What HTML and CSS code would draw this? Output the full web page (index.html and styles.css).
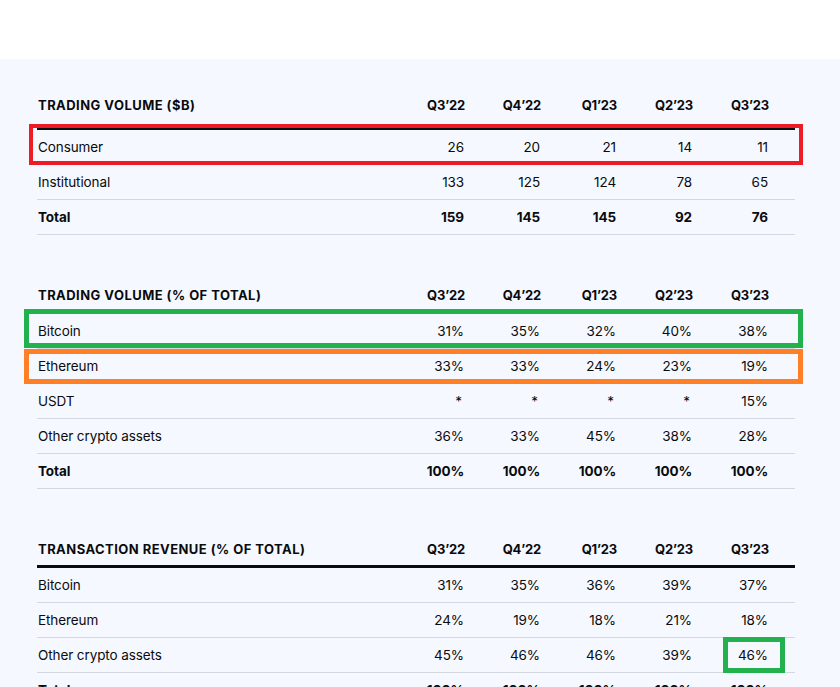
FILE: index.html
```html
<!DOCTYPE html>
<html lang="en">
<head>
<meta charset="utf-8">
<title>Trading volume</title>
<link rel="stylesheet" href="styles.css">
</head>
<body>
<div class="topbar"></div>
<main class="content">
  <section class="fin-table first">
    <div class="row head"><div class="label">TRADING VOLUME ($B)</div><div class="num">Q3’22</div><div class="num">Q4’22</div><div class="num">Q1’23</div><div class="num">Q2’23</div><div class="num">Q3’23</div></div>
    <div class="row mark-red"><div class="label">Consumer</div><div class="num">26</div><div class="num">20</div><div class="num">21</div><div class="num">14</div><div class="num">11</div></div>
    <div class="row"><div class="label">Institutional</div><div class="num">133</div><div class="num">125</div><div class="num">124</div><div class="num">78</div><div class="num">65</div></div>
    <div class="row total"><div class="label">Total</div><div class="num">159</div><div class="num">145</div><div class="num">145</div><div class="num">92</div><div class="num">76</div></div>
  </section>

  <section class="fin-table">
    <div class="row head"><div class="label">TRADING VOLUME (% OF TOTAL)</div><div class="num">Q3’22</div><div class="num">Q4’22</div><div class="num">Q1’23</div><div class="num">Q2’23</div><div class="num">Q3’23</div></div>
    <div class="row mark-green"><div class="label">Bitcoin</div><div class="num">31%</div><div class="num">35%</div><div class="num">32%</div><div class="num">40%</div><div class="num">38%</div></div>
    <div class="row mark-orange"><div class="label">Ethereum</div><div class="num">33%</div><div class="num">33%</div><div class="num">24%</div><div class="num">23%</div><div class="num">19%</div></div>
    <div class="row"><div class="label">USDT</div><div class="num star">*</div><div class="num star">*</div><div class="num star">*</div><div class="num star">*</div><div class="num">15%</div></div>
    <div class="row"><div class="label">Other crypto assets</div><div class="num">36%</div><div class="num">33%</div><div class="num">45%</div><div class="num">38%</div><div class="num">28%</div></div>
    <div class="row total"><div class="label">Total</div><div class="num">100%</div><div class="num">100%</div><div class="num">100%</div><div class="num">100%</div><div class="num">100%</div></div>
  </section>

  <section class="fin-table">
    <div class="row head"><div class="label">TRANSACTION REVENUE (% OF TOTAL)</div><div class="num">Q3’22</div><div class="num">Q4’22</div><div class="num">Q1’23</div><div class="num">Q2’23</div><div class="num">Q3’23</div></div>
    <div class="row"><div class="label">Bitcoin</div><div class="num">31%</div><div class="num">35%</div><div class="num">36%</div><div class="num">39%</div><div class="num">37%</div></div>
    <div class="row"><div class="label">Ethereum</div><div class="num">24%</div><div class="num">19%</div><div class="num">18%</div><div class="num">21%</div><div class="num">18%</div></div>
    <div class="row"><div class="label">Other crypto assets</div><div class="num">45%</div><div class="num">46%</div><div class="num">46%</div><div class="num">39%</div><div class="num mark-cell">46%</div></div>
    <div class="row total"><div class="label">Total</div><div class="num">100%</div><div class="num">100%</div><div class="num">100%</div><div class="num">100%</div><div class="num">100%</div></div>
  </section>
</main>
</body>
</html>
```

FILE: styles.css
```css
html, body {
  margin: 0;
  padding: 0;
  overflow: hidden;
}

body {
  font-family: Inter, "Noto Sans", "Liberation Sans", sans-serif;
  color: #0a0b0d;
  background: #f5f8ff;
}

.topbar {
  height: 59px;
  background: #ffffff;
}

.content {
  padding: 38px 45px 40px 37px;
  display: flex;
  flex-direction: column;
  gap: 52px;
}

.fin-table {
  display: flex;
  flex-direction: column;
}

.row {
  position: relative;
  display: grid;
  grid-template-columns: 1fr repeat(5, 76px);
  align-items: center;
  height: 35px;
  box-sizing: border-box;
  border-bottom: 1px solid #d3d7df;
  font-size: 13.5px;
  letter-spacing: -0.1px;
}

.row .label {
  padding-left: 1px;
}

.row .num {
  text-align: right;
  padding-right: 27px;
}

.row .star {
  padding-right: 29px;
}

.row.head {
  height: auto;
  align-items: end;
  padding-bottom: 8px;
  border-bottom: 3px solid #0a0b0d;
  font-size: 13px;
  font-weight: 700;
  line-height: 16px;
  letter-spacing: 0.45px;
}

.row.head .num {
  padding-right: 26px;
  letter-spacing: -0.2px;
}

.first .row.head {
  padding-bottom: 14px;
}

.row.total {
  font-weight: 700;
}

.mark-red::after,
.mark-green::after,
.mark-orange::after,
.mark-cell::after {
  content: "";
  position: absolute;
  box-sizing: border-box;
  pointer-events: none;
}

.mark-red::after {
  left: -8px;
  right: -8px;
  top: -6px;
  bottom: -1px;
  border: 4px solid #ed1c24;
}

.mark-green::after {
  left: -13px;
  right: -8px;
  top: -5px;
  bottom: 0;
  border: 5px solid #22b14c;
}

.mark-orange::after {
  left: -13px;
  right: -8px;
  top: 0;
  bottom: -1px;
  border: 5px solid #ff7f27;
}

.mark-cell {
  position: relative;
  align-self: stretch;
  display: flex;
  align-items: center;
  justify-content: flex-end;
}

.mark-cell::after {
  left: 4px;
  right: 10px;
  top: -1px;
  bottom: -1px;
  border: 5px solid #22b14c;
}
```
